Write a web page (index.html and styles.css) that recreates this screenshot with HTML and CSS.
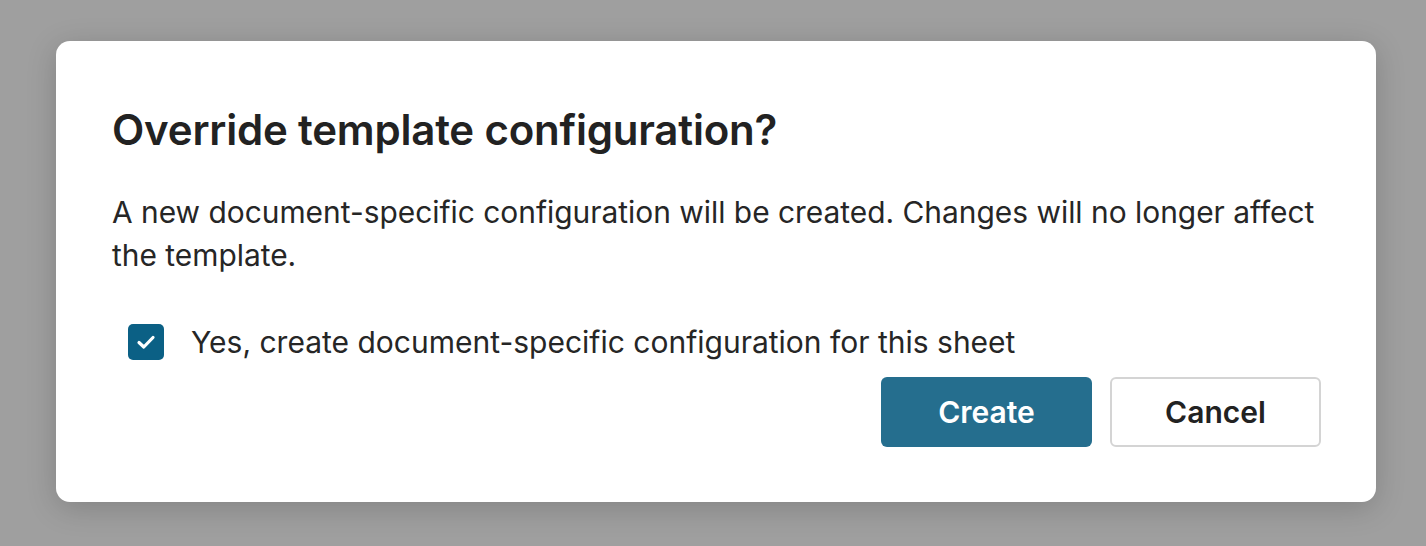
FILE: index.html
```html
<!DOCTYPE html>
<html>
<head>
<meta charset="utf-8">
<link rel="stylesheet" href="styles.css">
</head>
<body>
<div class="dialog">
  <h1 class="title">Override template configuration?</h1>
  <p class="desc">A new document-specific configuration will be created. Changes will no longer affect the template.</p>
  <label class="check-row">
    <span class="checkbox">
      <svg viewBox="0 0 36 36" width="36" height="36"><path d="M11 18.5 L15.8 23 L25 13.5" fill="none" stroke="#fff" stroke-width="3.2" stroke-linecap="round" stroke-linejoin="round"/></svg>
    </span>
    <span class="check-label">Yes, create document-specific configuration for this sheet</span>
  </label>
  <div class="actions">
    <button class="btn btn-primary">Create</button>
    <button class="btn btn-secondary">Cancel</button>
  </div>
</div>
</body>
</html>
```

FILE: styles.css
```css
html, body {
  margin: 0;
  padding: 0;
}
body {
  width: 1426px;
  height: 546px;
  background: #9f9f9f;
  overflow: hidden;
  padding-top: 41px;
  padding-left: 56px;
  box-sizing: border-box;
}
.dialog {
  width: 1320px;
  height: 461px;
  box-sizing: border-box;
  background: #fff;
  border-radius: 14px;
  box-shadow: 0 6px 30px rgba(0, 0, 0, 0.18);
  padding: 61px 55px 55px 56px;
  display: flex;
  flex-direction: column;
}
.title {
  margin: 0;
  font-family: Inter, Roboto, sans-serif;
  font-weight: 600;
  font-size: 42px;
  line-height: 56px;
  color: #222;
  letter-spacing: -0.2px;
}
.desc {
  margin: 33px 0 0 0;
  font-family: Inter, "Noto Sans", sans-serif;
  font-size: 29.9px;
  line-height: 43px;
  color: #262626;
}
.check-row {
  margin-top: 47px;
  margin-left: 16px;
  display: flex;
  align-items: center;
  gap: 27px;
  height: 36px;
}
.checkbox {
  width: 36px;
  height: 36px;
  border-radius: 5px;
  background: #0b6085;
  display: flex;
  align-items: center;
  justify-content: center;
  flex: none;
}
.check-label {
  font-family: Inter, "Noto Sans", sans-serif;
  font-size: 30px;
  color: #262626;
}
.actions {
  margin-top: 17px;
  display: flex;
  justify-content: flex-end;
  gap: 18px;
}
.btn {
  width: 211px;
  height: 70px;
  box-sizing: border-box;
  border-radius: 6px;
  font-family: Inter, "Noto Sans", sans-serif;
  font-weight: 600;
  font-size: 30px;
  cursor: pointer;
}
.btn-primary {
  background: #256e8e;
  color: #fff;
  border: none;
}
.btn-secondary {
  background: #fff;
  color: #222;
  border: 2px solid #d4d4d4;
}
```
